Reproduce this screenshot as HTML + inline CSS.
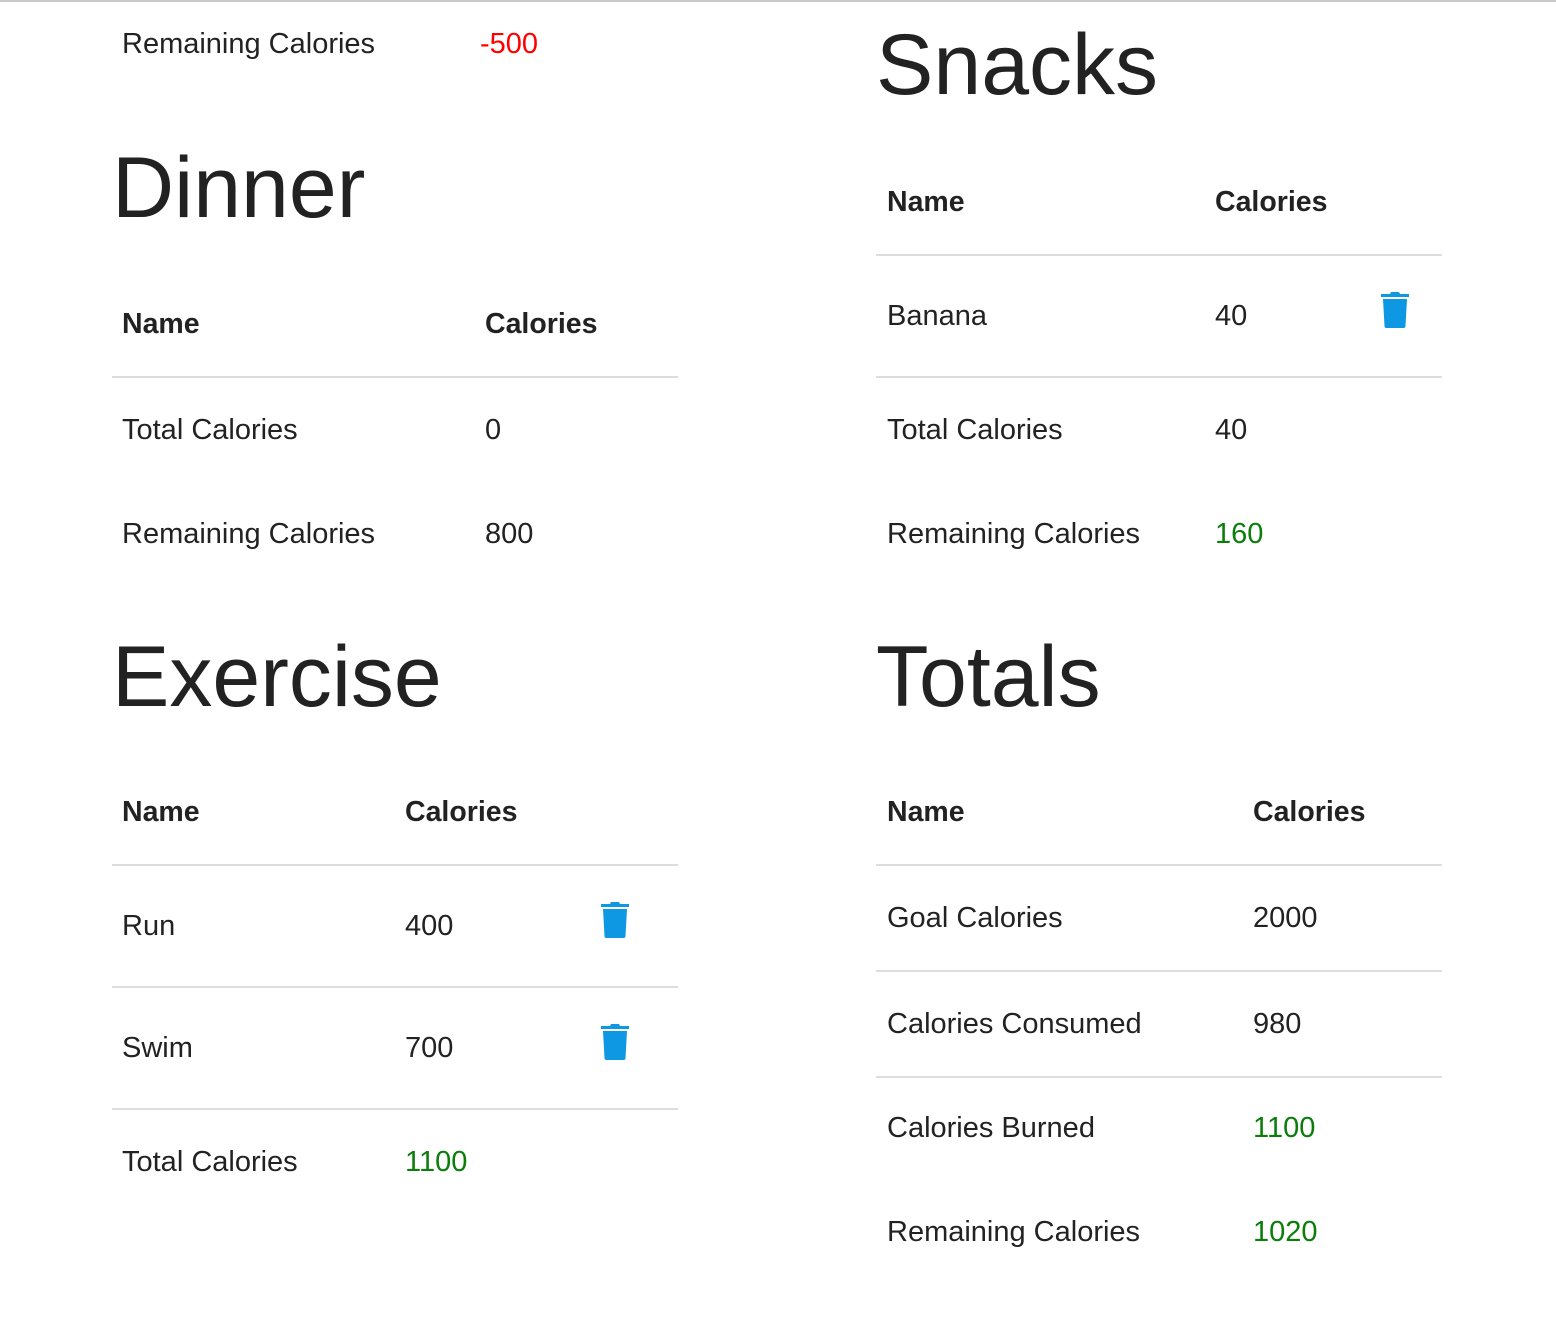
<!DOCTYPE html>
<html><head><style>
body{margin:0;width:1556px;height:1322px;background:#fff;position:relative;overflow:hidden;font-family:"Liberation Sans",sans-serif;color:#222}
.t{position:absolute;font-size:29px;line-height:40px;white-space:nowrap;margin-top:1px}
.b{font-weight:bold;font-size:28.5px}
.h{position:absolute;font-size:86px;line-height:100px;white-space:nowrap;color:#222}
.l{position:absolute;height:2px;background:#ddd}
.g{color:#0a7d0a}.r{color:#f00}
svg{position:absolute}
</style></head><body>
<div style="position:absolute;left:0;top:0;width:1556px;height:2px;background:#c8c8c8"></div>

<div class="t" style="left:122px;top:23px">Remaining Calories</div>
<div class="t r" style="left:480px;top:23px">-500</div>

<div class="h" style="left:112px;top:138px">Dinner</div>
<div class="t b" style="left:122px;top:303px">Name</div>
<div class="t b" style="left:485px;top:303px">Calories</div>
<div class="l" style="left:112px;top:376px;width:566px"></div>
<div class="t" style="left:122px;top:409px">Total Calories</div>
<div class="t" style="left:485px;top:409px">0</div>
<div class="t" style="left:122px;top:513px">Remaining Calories</div>
<div class="t" style="left:485px;top:513px">800</div>

<div class="h" style="left:112px;top:627px">Exercise</div>
<div class="t b" style="left:122px;top:791px">Name</div>
<div class="t b" style="left:405px;top:791px">Calories</div>
<div class="l" style="left:112px;top:864px;width:566px"></div>
<div class="t" style="left:122px;top:905px">Run</div>
<div class="t" style="left:405px;top:905px">400</div>
<div class="l" style="left:112px;top:986px;width:566px"></div>
<div class="t" style="left:122px;top:1027px">Swim</div>
<div class="t" style="left:405px;top:1027px">700</div>
<div class="l" style="left:112px;top:1108px;width:566px"></div>
<div class="t" style="left:122px;top:1141px">Total Calories</div>
<div class="t g" style="left:405px;top:1141px">1100</div>

<div class="h" style="left:876px;top:15px">Snacks</div>
<div class="t b" style="left:887px;top:181px">Name</div>
<div class="t b" style="left:1215px;top:181px">Calories</div>
<div class="l" style="left:876px;top:254px;width:566px"></div>
<div class="t" style="left:887px;top:295px">Banana</div>
<div class="t" style="left:1215px;top:295px">40</div>
<div class="l" style="left:876px;top:376px;width:566px"></div>
<div class="t" style="left:887px;top:409px">Total Calories</div>
<div class="t" style="left:1215px;top:409px">40</div>
<div class="t" style="left:887px;top:513px">Remaining Calories</div>
<div class="t g" style="left:1215px;top:513px">160</div>

<div class="h" style="left:876px;top:627px">Totals</div>
<div class="t b" style="left:887px;top:791px">Name</div>
<div class="t b" style="left:1253px;top:791px">Calories</div>
<div class="l" style="left:876px;top:864px;width:566px"></div>
<div class="t" style="left:887px;top:897px">Goal Calories</div>
<div class="t" style="left:1253px;top:897px">2000</div>
<div class="l" style="left:876px;top:970px;width:566px"></div>
<div class="t" style="left:887px;top:1003px">Calories Consumed</div>
<div class="t" style="left:1253px;top:1003px">980</div>
<div class="l" style="left:876px;top:1076px;width:566px"></div>
<div class="t" style="left:887px;top:1107px">Calories Burned</div>
<div class="t g" style="left:1253px;top:1107px">1100</div>
<div class="t" style="left:887px;top:1211px">Remaining Calories</div>
<div class="t g" style="left:1253px;top:1211px">1020</div>

<svg style="left:1380px;top:291px" width="30" height="38" viewBox="0 0 30 38"><path d="M11 1h8l1 2h9v3H1V3h9z M3 8h24l-1.5 27a2 2 0 0 1-2 2H6.5a2 2 0 0 1-2-2z" fill="#0e98e4"/></svg>
<svg style="left:600px;top:901px" width="30" height="38" viewBox="0 0 30 38"><path d="M11 1h8l1 2h9v3H1V3h9z M3 8h24l-1.5 27a2 2 0 0 1-2 2H6.5a2 2 0 0 1-2-2z" fill="#0e98e4"/></svg>
<svg style="left:600px;top:1023px" width="30" height="38" viewBox="0 0 30 38"><path d="M11 1h8l1 2h9v3H1V3h9z M3 8h24l-1.5 27a2 2 0 0 1-2 2H6.5a2 2 0 0 1-2-2z" fill="#0e98e4"/></svg>
</body></html>
